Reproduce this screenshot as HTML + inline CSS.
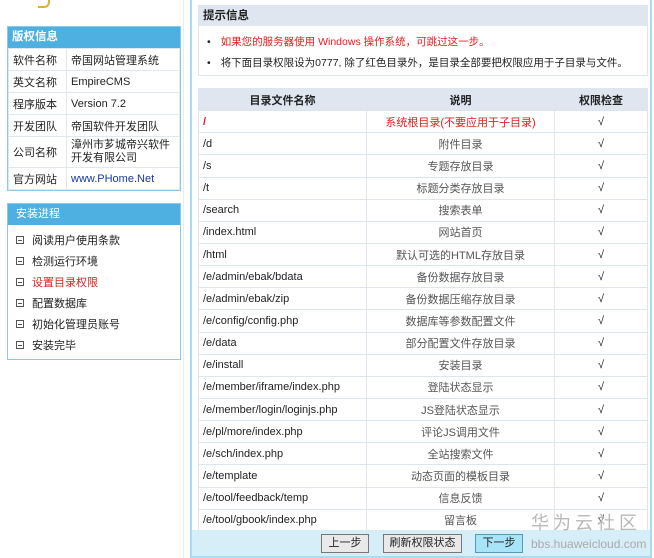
<!DOCTYPE html>
<html><head><meta charset="utf-8"><style>
*{margin:0;padding:0;box-sizing:border-box}
body{width:654px;height:558px;background:#fff;font-family:"Liberation Sans","Noto Sans CJK SC",sans-serif;font-size:11px;color:#222;position:relative;overflow:hidden}
.abs{position:absolute}
.lbox{left:7px;width:174px;border:1px solid #8ccbe8;background:#fff}
.lh{background:#4db0e0;color:#fff;font-weight:bold;height:21px;line-height:21px;padding-left:4px;font-size:11.5px}
table{border-collapse:collapse}
.ct td{border:1px solid #dde8f0;height:22px;padding-left:4px;font-size:11px}
.prog div{height:21px;line-height:21px;padding-left:8px;font-size:11px}
.prog span.b{display:inline-block;width:8px;height:8px;border:1px solid #555;position:relative;margin-right:8px;vertical-align:0}
.prog span.b:after{content:"";position:absolute;left:1px;right:1px;top:3px;height:1px;background:#555}
.mt td{border:1px solid #dbe6ee;height:22.15px;font-size:11px}
.mt td.c{text-align:center;color:#555}
.mt td.l{padding-left:4px}
.mt td.k{text-align:center}
.btn{position:absolute;top:534px;height:19px;border:1px solid #777;background:#e9e9e9;font-size:11px;text-align:center;line-height:17px}
</style></head><body>
<div class="abs" style="left:183px;top:0;width:1px;height:558px;background:#e6eef3"></div>
<div class="abs" style="left:190px;top:0;width:2px;height:558px;background:#a9dcf2"></div>
<div class="abs" style="left:650px;top:0;width:2px;height:558px;background:#a9dcf2"></div>
<div class="abs" style="left:38px;top:0;width:12px;height:8px;border-bottom:2px solid #d8b040;border-right:2px solid #d8b040;border-radius:0 0 6px 0"></div>

<div class="abs lbox" style="top:26px">
<div class="lh">版权信息</div>
<table class="ct" style="width:172px">
<tr><td style="width:58px">软件名称</td><td>帝国网站管理系统</td></tr>
<tr><td>英文名称</td><td>EmpireCMS</td></tr>
<tr><td>程序版本</td><td>Version 7.2</td></tr>
<tr><td>开发团队</td><td>帝国软件开发团队</td></tr>
<tr><td style="height:31px">公司名称</td><td style="line-height:13px;padding-right:2px">漳州市芗城帝兴软件开发有限公司</td></tr>
<tr><td>官方网站</td><td style="color:#1a3a9a">www.PHome.Net</td></tr>
</table></div>

<div class="abs lbox prog" style="top:203px;height:157px">
<div class="lh" style="font-weight:normal">安装进程</div>
<div style="height:6px"></div>
<div><span class="b"></span>阅读用户使用条款</div>
<div><span class="b"></span>检测运行环境</div>
<div style="color:#e02020"><span class="b"></span>设置目录权限</div>
<div><span class="b"></span>配置数据库</div>
<div><span class="b"></span>初始化管理员账号</div>
<div><span class="b"></span>安装完毕</div>
</div>

<div class="abs" style="left:198px;top:5px;width:450px;height:71px;border:1px solid #dde5ee;background:#fff">
<div style="background:#dfe6ef;height:20px;line-height:20px;padding-left:4px;font-weight:bold;font-size:11.5px">提示信息</div>
<div style="padding:6px 0 0 8px;line-height:21px;font-size:10.5px;white-space:nowrap">
<div style="color:#e02020"><span style="color:#222;margin-right:10px">•</span>如果您的服务器使用 Windows 操作系统，可跳过这一步。</div>
<div><span style="margin-right:10px">•</span>将下面目录权限设为0777, 除了红色目录外，是目录全部要把权限应用于子目录与文件。</div>
</div></div>

<table class="mt abs" style="left:198px;top:88px;width:450px">
<tr style="background:#dfe6ef;font-weight:bold"><td class="k" style="width:168px;height:21px">目录文件名称</td><td class="k" style="width:188px">说明</td><td class="k">权限检查</td></tr>
<tr><td class="l" style="color:#e02020;font-weight:bold">/</td><td class="c" style="color:#e02020">系统根目录(不要应用于子目录)</td><td class="k">√</td></tr>
<tr><td class="l">/d</td><td class="c">附件目录</td><td class="k">√</td></tr>
<tr><td class="l">/s</td><td class="c">专题存放目录</td><td class="k">√</td></tr>
<tr><td class="l">/t</td><td class="c">标题分类存放目录</td><td class="k">√</td></tr>
<tr><td class="l">/search</td><td class="c">搜索表单</td><td class="k">√</td></tr>
<tr><td class="l">/index.html</td><td class="c">网站首页</td><td class="k">√</td></tr>
<tr><td class="l">/html</td><td class="c">默认可选的HTML存放目录</td><td class="k">√</td></tr>
<tr><td class="l">/e/admin/ebak/bdata</td><td class="c">备份数据存放目录</td><td class="k">√</td></tr>
<tr><td class="l">/e/admin/ebak/zip</td><td class="c">备份数据压缩存放目录</td><td class="k">√</td></tr>
<tr><td class="l">/e/config/config.php</td><td class="c">数据库等参数配置文件</td><td class="k">√</td></tr>
<tr><td class="l">/e/data</td><td class="c">部分配置文件存放目录</td><td class="k">√</td></tr>
<tr><td class="l">/e/install</td><td class="c">安装目录</td><td class="k">√</td></tr>
<tr><td class="l">/e/member/iframe/index.php</td><td class="c">登陆状态显示</td><td class="k">√</td></tr>
<tr><td class="l">/e/member/login/loginjs.php</td><td class="c">JS登陆状态显示</td><td class="k">√</td></tr>
<tr><td class="l">/e/pl/more/index.php</td><td class="c">评论JS调用文件</td><td class="k">√</td></tr>
<tr><td class="l">/e/sch/index.php</td><td class="c">全站搜索文件</td><td class="k">√</td></tr>
<tr><td class="l">/e/template</td><td class="c">动态页面的模板目录</td><td class="k">√</td></tr>
<tr><td class="l">/e/tool/feedback/temp</td><td class="c">信息反馈</td><td class="k">√</td></tr>
<tr><td class="l">/e/tool/gbook/index.php</td><td class="c">留言板</td><td class="k">√</td></tr>
</table>

<div class="abs" style="left:192px;top:530px;width:458px;height:26px;background:#d6eef8"></div>
<div class="abs" style="left:190px;top:556px;width:462px;height:2px;background:#a9dcf2"></div>
<div class="btn" style="left:321px;width:48px">上一步</div>
<div class="btn" style="left:383px;width:79px">刷新权限状态</div>
<div class="btn" style="left:475px;width:48px;background:#a8e4f8;border-color:#5a9ab8">下一步</div>
<div class="abs" style="left:531px;top:513px;font-size:18px;line-height:20px;color:#b8b8b8;letter-spacing:4px;white-space:nowrap">华为云社区</div>
<div class="abs" style="left:531px;top:537px;font-size:12px;color:#aaa;white-space:nowrap">bbs.huaweicloud.com</div>
</body></html>
